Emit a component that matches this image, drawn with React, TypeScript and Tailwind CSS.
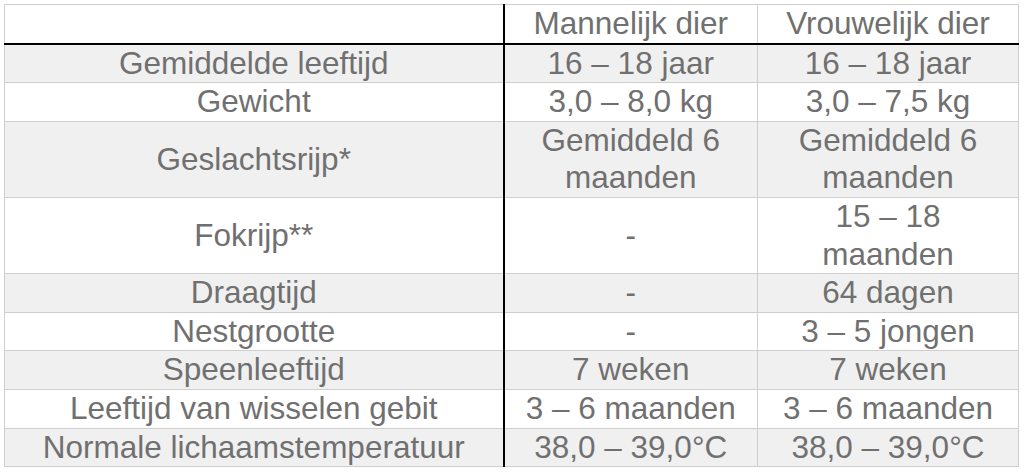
import { Fragment } from "react";

type Row = { label: string; male: React.ReactNode; female: React.ReactNode };

const rows: Row[] = [
  { label: "Gemiddelde leeftijd", male: "16 – 18 jaar", female: "16 – 18 jaar" },
  { label: "Gewicht", male: "3,0 – 8,0 kg", female: "3,0 – 7,5 kg" },
  {
    label: "Geslachtsrijp*",
    male: (
      <Fragment>
        Gemiddeld 6<br />maanden
      </Fragment>
    ),
    female: (
      <Fragment>
        Gemiddeld 6<br />maanden
      </Fragment>
    ),
  },
  {
    label: "Fokrijp**",
    male: "-",
    female: (
      <Fragment>
        15 – 18<br />maanden
      </Fragment>
    ),
  },
  { label: "Draagtijd", male: "-", female: "64 dagen" },
  { label: "Nestgrootte", male: "-", female: "3 – 5 jongen" },
  { label: "Speenleeftijd", male: "7 weken", female: "7 weken" },
  { label: "Leeftijd van wisselen gebit", male: "3 – 6 maanden", female: "3 – 6 maanden" },
  { label: "Normale lichaamstemperatuur", male: "38,0 – 39,0°C", female: "38,0 – 39,0°C" },
];

export default function App() {
  return (
    <div className="min-h-[472px] bg-white pl-1 pt-1 font-['Liberation_Sans',Arial,sans-serif] text-[#707070]">
      <table className="w-[1014px] table-fixed border-collapse text-center text-[31.5px] leading-[37.6px]">
        <colgroup>
          <col className="w-[499px]" />
          <col className="w-[254px]" />
          <col className="w-[261px]" />
        </colgroup>
        <thead>
          <tr className="bg-white">
            <th className="border border-b-2 border-r-2 border-[#cfcfcf] border-b-black border-r-black p-0 font-normal"></th>
            <th className="border border-b-2 border-[#cfcfcf] border-b-black p-0 font-normal">
              Mannelijk dier
            </th>
            <th className="border border-b-2 border-[#cfcfcf] border-b-black p-0 font-normal">
              Vrouwelijk dier
            </th>
          </tr>
        </thead>
        <tbody>
          {rows.map((r, i) => (
            <tr key={r.label} className={i % 2 === 0 ? "bg-[#f0f0f0]" : "bg-white"}>
              <td className="border border-r-2 border-[#cfcfcf] border-r-black p-0">{r.label}</td>
              <td className="border border-[#cfcfcf] p-0">{r.male}</td>
              <td className="border border-[#cfcfcf] p-0">{r.female}</td>
            </tr>
          ))}
        </tbody>
      </table>
    </div>
  );
}
